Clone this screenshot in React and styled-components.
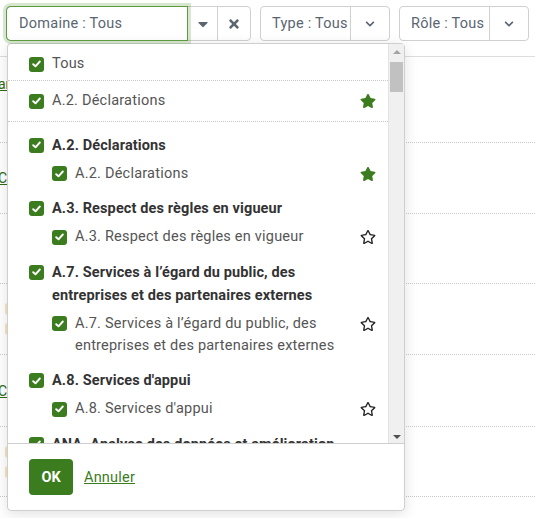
import styled, { createGlobalStyle } from 'styled-components';
import { FaStar, FaRegStar, FaCaretDown, FaTimes, FaChevronDown } from 'react-icons/fa';

const GREEN = '#3b7c1e';

const GlobalStyle = createGlobalStyle`
  body {
    margin: 0;
    background: #fff;
    font-family: Roboto, "Liberation Sans", sans-serif;
  }
`;

const Page = styled.div`
  position: relative;
  width: 535px;
  height: 518px;
  overflow: hidden;
`;

const Toolbar = styled.div`
  display: flex;
  gap: 9px;
  padding: 6px 6px 0;
`;

const FilterGroup = styled.div`
  display: flex;
  height: 35px;
  box-sizing: border-box;
  border: 1px solid #d0d0d0;
  border-radius: 4px;
  background: #fff;
`;

const FilterLabel = styled.div`
  display: flex;
  align-items: center;
  width: ${(p) => p.$width}px;
  box-sizing: border-box;
  padding-left: ${(p) => (p.$focused ? 12 : 11)}px;
  font-size: 14.5px;
  letter-spacing: 0.25px;
  color: #5a6571;
  ${(p) =>
    p.$focused &&
    `
    border-radius: 4px 0 0 4px;
    box-shadow: 0 0 0 1px #5d9a3f, 0 0 0 4px rgba(93, 154, 63, 0.25);
    position: relative;
    z-index: 3;
  `}
`;

const FilterButton = styled.div`
  display: flex;
  align-items: center;
  justify-content: center;
  box-sizing: border-box;
  width: ${(p) => p.$width}px;
  border-left: 1px solid #d0d0d0;
  color: #5a6571;
  font-size: ${(p) => p.$size || 12}px;
`;

const Table = styled.div`
  margin-top: 15px;
  border-top: 1px solid #ddd;
`;

const Row = styled.div`
  height: ${(p) => p.$height}px;
  box-sizing: border-box;
  border-bottom: 1px dotted #c8c8c8;
  display: flex;
  flex-direction: column;
  justify-content: ${(p) => (p.$top ? 'flex-start' : 'center')};
  padding-top: ${(p) => (p.$top ? 19 : 0)}px;
  gap: 8px;
  font-size: 14px;
`;

const RowLink = styled.a`
  color: #2f6b14;
  text-decoration: underline;
  margin-left: -2px;
`;

const Tag = styled.span`
  display: block;
  width: 20px;
  height: 12px;
  border-radius: 3px;
  background: #f6e2c0;
  margin-left: 5px;
`;

const Dropdown = styled.div`
  position: absolute;
  top: 43px;
  left: 7px;
  width: 398px;
  height: 468px;
  box-sizing: border-box;
  border: 1px solid #cfcfcf;
  border-radius: 4px;
  background: #fff;
  box-shadow: 0 3px 14px rgba(0, 0, 0, 0.12);
  display: flex;
  flex-direction: column;
  z-index: 2;
`;

const Body = styled.div`
  flex: 1;
  display: flex;
  min-height: 0;
`;

const ListArea = styled.div`
  flex: 1;
  overflow: hidden;
`;

const Scrollbar = styled.div`
  width: 16px;
  background: #f0f0f0;
  border-left: 1px solid #e4e4e4;
  display: flex;
  flex-direction: column;
  align-items: center;
  padding: 6px 0 4px;
  box-sizing: border-box;
`;

const ScrollArrow = styled.span`
  width: 0;
  height: 0;
  border-left: 4px solid transparent;
  border-right: 4px solid transparent;
  ${(p) => (p.$up ? 'border-bottom: 4px solid #a3a3a3;' : 'border-top: 4px solid #505050;')}
  ${(p) => p.$down && 'margin-top: auto;'}
`;

const Thumb = styled.span`
  width: 13px;
  height: 30px;
  margin-top: 8px;
  background: #c1c1c1;
`;

const Option = styled.div`
  display: flex;
  align-items: flex-start;
  gap: 8px;
  padding: ${(p) => p.$padTop || 0}px 0 ${(p) => p.$padBottom || 0}px ${(p) => p.$indent}px;
  margin-top: ${(p) => p.$top || 0}px;
  line-height: ${(p) => (p.$bold ? 23 : 22)}px;
  font-size: 14.5px;
  letter-spacing: ${(p) => (p.$bold ? 0.12 : 0.22)}px;
  font-weight: ${(p) => (p.$bold ? 700 : 400)};
  color: ${(p) => (p.$bold ? '#333' : '#555')};
  ${(p) => p.$divider && 'border-bottom: 1px dotted #c8c8c8;'}
`;

const Check = styled.span`
  flex: none;
  width: 15px;
  height: 15px;
  margin-top: ${(p) => (p.$bold ? 4 : 3.5)}px;
  border-radius: 3px;
  background: ${GREEN};
  display: flex;
  align-items: center;
  justify-content: center;
`;

const Label = styled.span`
  white-space: pre-line;
`;

const StarSlot = styled.span`
  margin-left: auto;
  margin-right: 12px;
  margin-top: 3px;
  display: flex;
  font-size: 16px;
  color: ${(p) => (p.$fav ? GREEN : '#222')};
`;

const Group = styled.div`
  padding-top: ${(p) => (p.$first ? 11.5 : 12.5)}px;
`;

const Footer = styled.div`
  height: 66px;
  flex: none;
  border-top: 1px solid #cfcfcf;
  display: flex;
  align-items: center;
  gap: 11px;
  padding-left: 21px;
`;

const OkButton = styled.button`
  width: 44px;
  height: 36px;
  border: none;
  border-radius: 4px;
  background: ${GREEN};
  color: #fff;
  font-family: inherit;
  font-size: 14.5px;
  font-weight: 700;
`;

const CancelLink = styled.a`
  color: ${GREEN};
  font-size: 14.5px;
  letter-spacing: 0.2px;
  text-decoration: underline;
`;

function CheckBox({ bold }) {
  return (
    <Check $bold={bold}>
      <svg width="9" height="8" viewBox="0 0 9 8">
        <path d="M1.2 4.2 L3.5 6.3 L7.8 1.5" fill="none" stroke="#fff" strokeWidth="1.9" strokeLinecap="round" strokeLinejoin="round" />
      </svg>
    </Check>
  );
}

function Star({ fav }) {
  return <StarSlot $fav={fav}>{fav ? <FaStar /> : <FaRegStar />}</StarSlot>;
}

const groups = [
  { title: 'A.2. Déclarations', child: 'A.2. Déclarations', fav: true },
  { title: 'A.3. Respect des règles en vigueur', child: 'A.3. Respect des règles en vigueur', fav: false },
  {
    title: 'A.7. Services à l’égard du public, des\nentreprises et des partenaires externes',
    child: 'A.7. Services à l’égard du public, des\nentreprises et des partenaires externes',
    fav: false,
  },
  { title: "A.8. Services d'appui", child: "A.8. Services d'appui", fav: false },
  { title: 'ANA. Analyse des données et amélioration', child: null },
];

const rows = [
  { h: 86, top: true, content: <RowLink>ar</RowLink> },
  { h: 71, content: <RowLink>Ca</RowLink> },
  { h: 70, content: null },
  { h: 71, content: [<Tag key="a" />, <Tag key="b" />] },
  { h: 72, content: <RowLink>Ca</RowLink> },
  { h: 70, content: [<Tag key="a" />, <Tag key="b" />] },
];

export default function App() {
  return (
    <Page>
      <GlobalStyle />
      <Toolbar>
        <FilterGroup>
          <FilterLabel $width={180} $focused>Domaine : Tous</FilterLabel>
          <FilterButton $width={30} $size={16}>
            <FaCaretDown />
          </FilterButton>
          <FilterButton $width={33} $size={14}>
            <FaTimes />
          </FilterButton>
        </FilterGroup>
        <FilterGroup>
          <FilterLabel $width={89}>Type : Tous</FilterLabel>
          <FilterButton $width={39} $size={10}>
            <FaChevronDown />
          </FilterButton>
        </FilterGroup>
        <FilterGroup>
          <FilterLabel $width={89}>Rôle : Tous</FilterLabel>
          <FilterButton $width={39} $size={10}>
            <FaChevronDown />
          </FilterButton>
        </FilterGroup>
      </Toolbar>

      <Table>
        {rows.map((r, i) => (
          <Row key={i} $height={r.h} $top={r.top}>
            {r.content}
          </Row>
        ))}
      </Table>

      <Dropdown>
        <Body>
          <ListArea>
            <Option $indent={21} $padTop={9} $padBottom={5} $divider>
              <CheckBox />
              <Label>Tous</Label>
            </Option>
            <Option $indent={21} $padTop={9} $padBottom={9} $divider>
              <CheckBox />
              <Label>A.2. Déclarations</Label>
              <Star fav />
            </Option>
            {groups.map((g, i) => (
              <Group key={g.title} $first={i === 0}>
                <Option $indent={21} $bold>
                  <CheckBox bold />
                  <Label>{g.title}</Label>
                </Option>
                {g.child && (
                  <Option $indent={44} $top={6}>
                    <CheckBox />
                    <Label>{g.child}</Label>
                    <Star fav={g.fav} />
                  </Option>
                )}
              </Group>
            ))}
          </ListArea>
          <Scrollbar>
            <ScrollArrow $up />
            <Thumb />
            <ScrollArrow $down />
          </Scrollbar>
        </Body>
        <Footer>
          <OkButton>OK</OkButton>
          <CancelLink>Annuler</CancelLink>
        </Footer>
      </Dropdown>
    </Page>
  );
}
